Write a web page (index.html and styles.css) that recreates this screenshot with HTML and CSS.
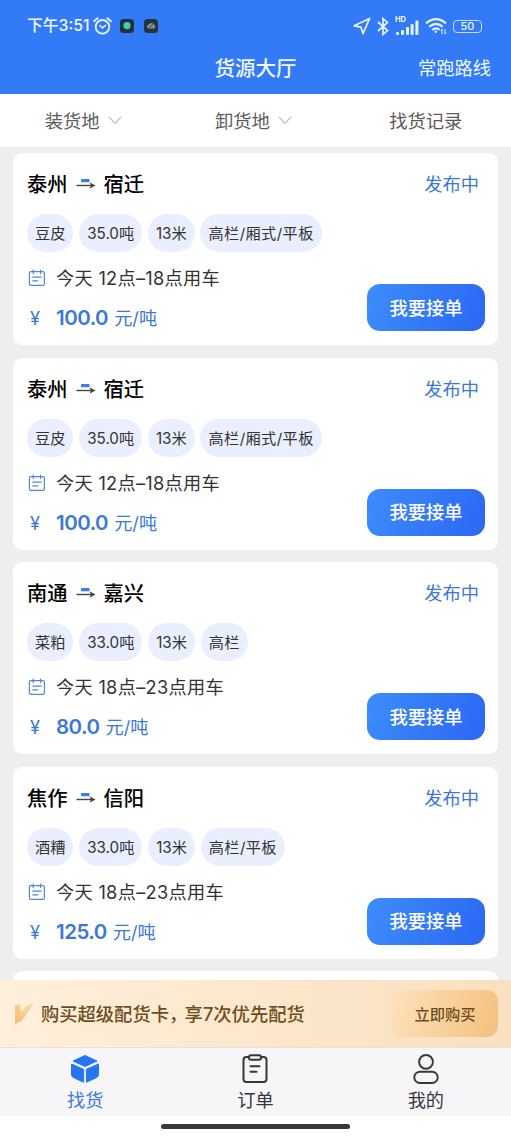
FILE: index.html
```
<!DOCTYPE html>
<html lang="zh-CN">
  <head>
    <meta charset="UTF-8" />
    <title>货源大厅</title>
    <meta name="viewport" content="width=device-width, initial-scale=1.0" />
    <link rel="stylesheet" href="styles.css">
  </head>
  <body>
    <!-- shared icons -->
    <svg class="sprite" width="0" height="0">
      <symbol id="icon-arrow" viewBox="0 0 20 14">
        <rect x="5" y="1" width="8.5" height="3.2" rx="0.8" fill="#3b7de8" />
        <path d="M0.5 7.500H17" stroke="#444" stroke-width="1.4" fill="none" />
        <path d="M13.500 4.200L19.500 7.500L13.500 10.800L15 7.500Z" fill="#444" />
      </symbol>
      <symbol id="icon-date" viewBox="0 0 18 18">
        <g fill="none" stroke="#4f86de" stroke-width="1.2" stroke-linecap="round">
          <rect x="1.4" y="2.6" width="15" height="13.8" rx="1.6" />
          <path d="M5.2 1v3.6M12.6 1v3.6M4.8 8.2h8.4M4.8 11.8h5" />
        </g>
      </symbol>
      <symbol id="icon-down" viewBox="0 0 14 9">
        <path d="M1 1l6 6.4L13 1" fill="none" stroke="#c4c4c4" stroke-width="1.3" />
      </symbol>
    </svg>

    <header class="header">
      <div class="status-bar">
        <div class="status-left">
          <span class="time">下午3:51</span>
          <svg width="19" height="18" viewBox="0 0 19 18" fill="none" stroke="#e6f2ff" stroke-width="1.8" stroke-linecap="round">
            <circle cx="9.5" cy="9.8" r="6.8" />
            <path d="M1 4.2L4.6 1.2M18 4.2L14.4 1.2" />
            <path d="M7 8.6l2.6 2.3 3-2.6" stroke-width="1.5" />
          </svg>
          <svg class="app-dot" width="14" height="14" viewBox="0 0 14 14">
            <rect width="14" height="14" rx="3.5" fill="#20323f" />
            <circle cx="7" cy="6.6" r="3.6" fill="#45cda3" />
          </svg>
          <svg class="app-dot" width="14" height="14" viewBox="0 0 14 14">
            <rect width="14" height="14" rx="3.5" fill="#253440" />
            <path d="M4.5 9.5a2 2 0 0 1 .3-3.9 3 3 0 0 1 5.6.6 1.8 1.8 0 0 1-.4 3.3z" fill="#86929a" />
            <path d="M5 8.5l4-3" stroke="#35434d" stroke-width="0.9" />
          </svg>
        </div>
        <div class="status-right">
          <svg width="18" height="18" viewBox="0 0 18 18" fill="none" stroke="#e6f2ff" stroke-width="1.7" stroke-linejoin="round">
            <path d="M16.6 1.4L1.2 8.8l6.8 1.4 2 6.4z" />
          </svg>
          <svg class="bluetooth" width="12" height="19" viewBox="0 0 12 19" fill="none" stroke="#e6f2ff" stroke-width="1.7">
            <path d="M1 5l9.5 8.6L6 17.4V1.6l4.5 3.8L1 14" />
          </svg>
          <div class="signal">
            <span class="hd">HD</span>
            <svg width="24" height="16" viewBox="0 0 24 16" fill="#e6f2ff">
              <rect x="1" y="13" width="3" height="3" rx="1" />
              <rect x="6" y="11" width="3" height="5" rx="1" />
              <rect x="11" y="8" width="3" height="8" rx="1" />
              <rect x="15.6" y="5" width="3" height="11" rx="1" />
              <rect x="20.4" y="1.6" width="3" height="14.4" rx="1" />
            </svg>
          </div>
          <svg class="wifi" width="22" height="18" viewBox="0 0 22 18" fill="none" stroke="#e6f2ff" stroke-width="2.1">
            <path d="M1 6.4Q11-2 21 6.4M4.2 9.8Q11 4 17.8 9.8M7.2 13Q11 9.8 14.6 12.8" />
            <circle cx="10.8" cy="14.8" r="1.2" fill="#e6f2ff" stroke="none" />
            <path d="M17 12v5M16 13.4l1-1.4M20 12v5M21 15.6l-1 1.4" stroke-width="1" />
          </svg>
          <span class="battery">50</span>
        </div>
      </div>
      <div class="nav">
        <h1>货源大厅</h1>
        <a class="nav-link">常跑路线</a>
      </div>
    </header>

    <div class="filters">
      <div class="filter">装货地<svg width="14" height="9"><use href="#icon-down" /></svg></div>
      <div class="filter">卸货地<svg width="14" height="9"><use href="#icon-down" /></svg></div>
      <div class="filter">找货记录</div>
    </div>

    <main class="list">
      <section class="card">
        <div class="card-head">
          <h2>泰州<svg width="20" height="14"><use href="#icon-arrow" /></svg>宿迁</h2>
          <span class="state">发布中</span>
        </div>
        <div class="tags">
          <span>豆皮</span><span>35.0吨</span><span>13米</span><span>高栏/厢式/平板</span>
        </div>
        <div class="card-foot">
          <div>
            <div class="date"><svg width="18" height="18"><use href="#icon-date" /></svg>今天 12点–18点用车</div>
            <div class="price"><i>¥</i><b>100.0</b>元/吨</div>
          </div>
          <button class="accept">我要接单</button>
        </div>
      </section>

      <section class="card">
        <div class="card-head">
          <h2>泰州<svg width="20" height="14"><use href="#icon-arrow" /></svg>宿迁</h2>
          <span class="state">发布中</span>
        </div>
        <div class="tags">
          <span>豆皮</span><span>35.0吨</span><span>13米</span><span>高栏/厢式/平板</span>
        </div>
        <div class="card-foot">
          <div>
            <div class="date"><svg width="18" height="18"><use href="#icon-date" /></svg>今天 12点–18点用车</div>
            <div class="price"><i>¥</i><b>100.0</b>元/吨</div>
          </div>
          <button class="accept">我要接单</button>
        </div>
      </section>

      <section class="card">
        <div class="card-head">
          <h2>南通<svg width="20" height="14"><use href="#icon-arrow" /></svg>嘉兴</h2>
          <span class="state">发布中</span>
        </div>
        <div class="tags">
          <span>菜粕</span><span>33.0吨</span><span>13米</span><span>高栏</span>
        </div>
        <div class="card-foot">
          <div>
            <div class="date"><svg width="18" height="18"><use href="#icon-date" /></svg>今天 18点–23点用车</div>
            <div class="price"><i>¥</i><b>80.0</b>元/吨</div>
          </div>
          <button class="accept">我要接单</button>
        </div>
      </section>

      <section class="card">
        <div class="card-head">
          <h2>焦作<svg width="20" height="14"><use href="#icon-arrow" /></svg>信阳</h2>
          <span class="state">发布中</span>
        </div>
        <div class="tags">
          <span>酒糟</span><span>33.0吨</span><span>13米</span><span>高栏/平板</span>
        </div>
        <div class="card-foot">
          <div>
            <div class="date"><svg width="18" height="18"><use href="#icon-date" /></svg>今天 18点–23点用车</div>
            <div class="price"><i>¥</i><b>125.0</b>元/吨</div>
          </div>
          <button class="accept">我要接单</button>
        </div>
      </section>

      <section class="card"></section>
    </main>

    <div class="promo">
      <svg width="21" height="22" viewBox="0 0 21 22">
        <defs>
          <linearGradient id="gold" x1="0" y1="1" x2="1" y2="0">
            <stop offset="0" stop-color="#f3bd76" />
            <stop offset="1" stop-color="#fbdcae" />
          </linearGradient>
        </defs>
        <path d="M1 2l5-1 1.500 8L14 1.500 20 .5 8 17.500 1 21.500z" fill="url(#gold)" />
      </svg>
      <p>购买超级配货卡<span class="comma">，</span>享7次优先配货</p>
      <button class="buy">立即购买</button>
    </div>

    <nav class="tabbar">
      <a class="tab active">
        <svg width="30" height="30" viewBox="0 0 30 30" fill="#2476f5" stroke="#2476f5" stroke-linejoin="round">
          <path d="M15 1.5L27 7 15 12.5 3 7z" />
          <path d="M1.5 10L13.6 15.3v13L3.5 23.6q-2-1-2-3z" />
          <path d="M28.5 10L16.4 15.3v13l10.1-4.7q2-1 2-3z" />
        </svg>
        <span>找货</span>
      </a>
      <a class="tab">
        <svg width="30" height="30" viewBox="0 0 30 30" fill="none" stroke="#37373b" stroke-width="2" stroke-linecap="round">
          <path d="M9 3H6.5q-3 0-3 3v19q0 3 3 3h17q3 0 3-3V6q0-3-3-3H21" />
          <rect x="9" y="1.2" width="12" height="4.6" rx="2" />
          <path d="M10.5 12.3h9M10.5 17.8h6" />
        </svg>
        <span>订单</span>
      </a>
      <a class="tab">
        <svg width="30" height="30" viewBox="0 0 30 30" fill="none" stroke="#37373b" stroke-width="1.9">
          <circle cx="15" cy="7.9" r="6.9" />
          <rect x="3.3" y="17.8" width="23.4" height="11.2" rx="5.6" />
        </svg>
        <span>我的</span>
      </a>
    </nav>
    <div class="home-bar"><span></span></div>
  </body>
</html>
```
FILE: styles.css
```
* {
  box-sizing: border-box;
}

body {
  margin: 0;
  width: 511px;
  height: 1137px;
  overflow: hidden;
  display: flex;
  flex-direction: column;
  background: #fff;
  color: #333;
  font-family: Inter, "Noto Sans CJK SC", sans-serif;
}

svg {
  flex-shrink: 0;
}

.sprite {
  position: absolute;
}

h1,
h2,
p {
  margin: 0;
}

button {
  border: none;
  padding: 0 0 2px;
  font-family: inherit;
}

/* header */
.header {
  height: 94px;
  background: #337bf6;
  color: #eef6ff;
}

.status-bar {
  height: 52px;
  padding: 0 29px 0 27px;
  display: flex;
  justify-content: space-between;
  align-items: center;
}

.status-left,
.status-right {
  display: flex;
  align-items: center;
}

.time {
  width: 66px;
  font-size: 15.8px;
  line-height: 24px;
  font-weight: 500;
  white-space: nowrap;
}

.app-dot {
  margin-left: 8px;
}

.app-dot + .app-dot {
  margin-left: 10px;
}

.bluetooth {
  margin-left: 6px;
}

.signal {
  display: flex;
  position: relative;
  margin-left: 6px;
  padding-top: 2px;
}

.hd {
  position: absolute;
  left: 0;
  top: -1px;
  font-size: 7.5px;
  line-height: 8px;
  font-weight: 700;
}

.wifi {
  margin: 0 6px 0 6px;
}

.battery {
  width: 29px;
  height: 13px;
  border: 1.5px solid #c3dcff;
  border-radius: 4px;
  font-size: 11px;
  line-height: 11px;
  font-weight: 500;
  text-align: center;
}

.nav {
  display: grid;
  grid-template-columns: 1fr auto 1fr;
  align-items: center;
  height: 32px;
  padding: 0 20px;
}

.nav h1 {
  grid-column: 2;
  padding-top: 1px;
  font-size: 20.5px;
  line-height: 30px;
  font-weight: 500;
}

.nav-link {
  text-align: right;
  font-size: 18.3px;
  line-height: 30px;
}

/* filters */
.filters {
  display: grid;
  grid-template-columns: repeat(3, 1fr);
  height: 53px;
  padding-bottom: 1px;
  background: #fff;
}

.filter {
  display: flex;
  align-items: center;
  justify-content: center;
  gap: 8px;
  font-size: 18.3px;
  color: #5d5d5d;
}

.filter svg {
  margin-right: 4px;
}

.filter:last-child {
  color: #5f5757;
}

/* goods list */
.list {
  height: 833px;
  overflow: hidden;
  padding: 6px 13px 0;
  background: #efeeee;
}

.card {
  height: 192px;
  margin-bottom: 12.6px;
  padding: 18px 13px 14px 14px;
  border-radius: 9px;
  background: #fff;
}

.card-head {
  display: flex;
  justify-content: space-between;
  height: 28px;
  padding-right: 6px;
}

.card h2 {
  display: flex;
  align-items: center;
  gap: 8px;
  font-size: 20.3px;
  line-height: 30px;
  font-weight: 500;
  color: #000;
}

.state {
  font-size: 18.3px;
  line-height: 26px;
  color: #3d78d8;
}

.tags {
  display: flex;
  gap: 5.8px;
  margin-top: 15px;
}

.tags span {
  height: 38px;
  padding: 0 8px;
  border-radius: 19px;
  background: #e9effe;
  font-size: 15.2px;
  line-height: 40px;
  white-space: nowrap;
}

.tags span:last-child {
  letter-spacing: 0.4px;
}

.card-foot {
  display: flex;
  justify-content: space-between;
  align-items: flex-end;
  margin-top: 11px;
}

.date {
  display: flex;
  align-items: center;
  gap: 10px;
  height: 30px;
  padding-left: 1px;
  font-size: 18.2px;
  line-height: 28px;
  letter-spacing: 0.3px;
}

.price {
  display: flex;
  align-items: baseline;
  height: 28px;
  margin-top: 10px;
  font-size: 18.2px;
  line-height: 30px;
  color: #3d78d8;
}

.price i {
  width: 29px;
  padding-left: 3px;
  font-style: normal;
}

.price b {
  margin-right: 6px;
  font-size: 20.5px;
  font-weight: 600;
  letter-spacing: -0.5px;
}

.accept {
  width: 118px;
  height: 47px;
  border-radius: 13px;
  background: linear-gradient(110deg, #3d8dfb, #2b67f3);
  color: #fff;
  font-size: 18.3px;
  font-weight: 500;
}

/* promo strip */
.promo {
  display: flex;
  align-items: center;
  height: 67px;
  padding: 0 13px 0 14px;
  background: linear-gradient(90deg, #ffefdb, #fbe5c8 65%, #f9e0c0);
  color: #6f4d1c;
}

.promo p {
  flex: 1;
  margin-left: 6px;
  padding-bottom: 2px;
  font-size: 18.3px;
  font-weight: 500;
  white-space: nowrap;
}

.comma {
  margin-right: 6.5px;
  font-feature-settings: "halt";
}

.buy {
  width: 106px;
  height: 47px;
  border-radius: 11px;
  background: linear-gradient(110deg, #fde2bd, #f4c07d);
  color: #6f4d1c;
  font-size: 15.3px;
  font-weight: 500;
}

/* bottom tabs */
.tabbar {
  display: grid;
  grid-template-columns: repeat(3, 1fr);
  height: 69px;
  padding-top: 6px;
  border-top: 1px solid #e4e1df;
  background: #f6f6f9;
}

.tab {
  display: flex;
  flex-direction: column;
  align-items: center;
  font-size: 18.2px;
  line-height: 32px;
  color: #37373b;
}

.tab.active {
  color: #3d7cdf;
}

.home-bar {
  display: flex;
  justify-content: center;
  height: 21px;
  padding-top: 8px;
}

.home-bar span {
  width: 189px;
  height: 5px;
  border-radius: 3px;
  background: #39393b;
}
```
